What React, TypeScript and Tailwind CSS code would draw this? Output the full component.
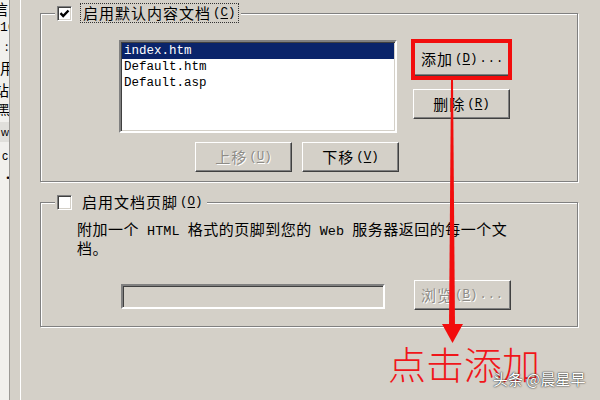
import React from 'react';

const CJK = "font-['Noto_Sans_CJK_SC','Liberation_Sans',sans-serif]";
const MONO = "font-['Liberation_Mono','Noto_Sans_CJK_SC',monospace]";

// underlined mnemonic letter, e.g. (C)
const Key = ({ k }: { k: string }) => (
  <span className={`${MONO} text-[12.5px] tracking-normal ml-[2px]`}>
    (<span className="underline underline-offset-2">{k}</span>)
  </span>
);

const CheckBox = ({ checked }: { checked?: boolean }) => (
  <div className="w-[15px] h-[15px] shrink-0 bg-white border border-t-[#808080] border-l-[#808080] border-r-white border-b-white shadow-[inset_1px_1px_0_#404040,inset_-1px_-1px_0_#d4d0c8] flex items-center justify-center">
    {checked && (
      <svg width="11" height="11" viewBox="0 0 11 11">
        <path d="M1.5 5.2 L4.2 8 L9.5 2.5" stroke="#000" strokeWidth="2.4" fill="none" />
      </svg>
    )}
  </div>
);

const Btn = ({
  children,
  disabled,
  className,
}: {
  children: React.ReactNode;
  disabled?: boolean;
  className?: string;
}) => (
  <div
    className={`flex items-center justify-center whitespace-nowrap bg-[#d4d0c8] border border-t-white border-l-white border-r-[#404040] border-b-[#404040] shadow-[inset_-1px_-1px_0_#808080] text-[15px] tracking-[1px] ${CJK} ${
      disabled ? 'text-[#8e8c87] [text-shadow:1px_1px_0_#fff]' : 'text-black'
    } ${className ?? ''}`}
  >
    {children}
  </div>
);

const FILES = ['index.htm', 'Default.htm', 'Default.asp'];

export default function App() {
  return (
    <div className="relative w-[600px] h-[400px] overflow-hidden bg-[#d4d0c8] flex text-black">
      {/* window behind, cut off at the left */}
      <div className={`w-[9px] shrink-0 bg-[#f1f0ed] overflow-hidden flex flex-col text-[15px] leading-none ${CJK}`}>
        <div className="h-[18px] -ml-[7px] pt-px whitespace-nowrap">信</div>
        <div className={`h-[20px] pt-[3px] text-[13px] whitespace-nowrap ${MONO}`}>16</div>
        <div className="h-[22px] pl-[5px] text-[12px] pt-[2px]">:</div>
        <div className="h-[22px] whitespace-nowrap">用</div>
        <div className="h-[20px] -ml-[6px] whitespace-nowrap">站</div>
        <div className="h-[20px] -ml-[3px] text-[13px] whitespace-nowrap">黑</div>
        <div className="h-[20px] bg-[#e0dfdb] text-[11px] font-['Liberation_Sans',sans-serif] pt-[5px] pl-px">w</div>
        <div className="h-[26px] text-[12px] font-['Liberation_Sans',sans-serif] pt-[8px] pl-[2px]">c</div>
        <div className="h-[22px] text-[12px] pt-[4px] pl-[2px]">·</div>
      </div>
      <div className="w-px shrink-0 bg-[#9c9a96]" />
      <div className="w-[10px] shrink-0" />
      <div className="w-px shrink-0 bg-white" />

      {/* dialog body */}
      <div className="flex-1 pl-[19px] pr-[22px] flex flex-col">
        {/* default document group */}
        <fieldset className="mt-[3px] border border-[#808080] shadow-[inset_1px_1px_0_#fff,1px_1px_0_#fff] pb-[9px]">
          <legend className="ml-[14px] px-[2px] bg-[#d4d0c8]">
            <div className="h-[20px] flex items-center">
              <CheckBox checked />
              <div className={`ml-[8px] h-[20px] px-[2px] flex items-center border border-dotted border-[#333] text-[15px] tracking-[1px] whitespace-nowrap ${CJK}`}>
                启用默认内容文档<Key k="C" />
              </div>
            </div>
          </legend>

          <div className="pl-[78px]">
            <div className="mt-[17px] flex items-start">
              <div className="w-[278px] h-[93px] bg-white border-2 border-t-[#808080] border-l-[#808080] border-r-white border-b-white shadow-[inset_1px_1px_0_#404040,inset_-1px_-1px_0_#d4d0c8] p-px">
                {FILES.map((f, i) => (
                  <div
                    key={f}
                    className={`h-[16px] pl-[2px] flex items-center text-[12.5px] ${MONO} ${
                      i === 0 ? 'bg-[#0a246a] text-white' : 'text-black'
                    }`}
                  >
                    {f}
                  </div>
                ))}
              </div>

              <div className="ml-[14px] -mt-px flex flex-col">
                <div className="relative w-[101px] h-[41px] p-[3px] pl-[2px]">
                  <Btn className="w-[97px] h-[34px] justify-start pl-[7px]">
                    添加<Key k="D" />
                    <span className={`${MONO} tracking-[1px] text-[12px] ml-[2px]`}>...</span>
                  </Btn>
                  <div className="absolute inset-0 border-4 border-[#f20d0d]" />
                </div>
                <Btn className="mt-[9px] ml-[2px] w-[97px] h-[30px]">
                  删除<Key k="R" />
                </Btn>
              </div>
            </div>

            <div className="mt-[9px] ml-[76px] flex gap-[10px]">
              <Btn disabled className="w-[97px] h-[30px]">
                上移<Key k="U" />
              </Btn>
              <Btn className="w-[97px] h-[30px]">
                下移<Key k="V" />
              </Btn>
            </div>
          </div>
        </fieldset>

        {/* footer group */}
        <fieldset className="mt-[10px] border border-[#808080] shadow-[inset_1px_1px_0_#fff,1px_1px_0_#fff] pb-[16px]">
          <legend className="ml-[14px] px-[2px] bg-[#d4d0c8]">
            <div className="h-[20px] flex items-center">
              <CheckBox />
              <div className={`ml-[8px] h-[20px] px-[2px] flex items-center text-[15px] tracking-[1px] whitespace-nowrap ${CJK}`}>
                启用文档页脚<Key k="O" />
              </div>
            </div>
          </legend>

          <div className="pl-[36px]">
            <div className={`mt-[9px] text-[15px] leading-[16px] tracking-[0.5px] whitespace-nowrap ${CJK}`}>
              附加一个<span className={`${MONO} text-[13.5px] tracking-normal`}> HTML </span>
              格式的页脚到您的<span className={`${MONO} text-[13.5px] tracking-normal`}> Web </span>
              服务器返回的每一个文
              <br />
              档。
            </div>

            <div className="mt-[24px] ml-[44px] flex items-start">
              <div className="mt-[4px] w-[264px] h-[25px] bg-[#d4d0c8] border-2 border-t-[#808080] border-l-[#808080] border-r-white border-b-white shadow-[inset_1px_1px_0_#404040,inset_-1px_-1px_0_#d4d0c8]" />
              <Btn disabled className="ml-[29px] w-[97px] h-[30px]">
                浏览<Key k="B" />
                <span className={`${MONO} tracking-[1px] text-[12px] ml-[2px]`}>...</span>
              </Btn>
            </div>
          </div>
        </fieldset>
      </div>

      {/* red annotation arrow */}
      <svg className="absolute left-0 top-0 pointer-events-none" width="600" height="400" viewBox="0 0 600 400">
        <polygon points="451,79 453,79 455,327 449,327" fill="#f20d0d" />
        <polygon points="442,324 463,324 452.5,343" fill="#f20d0d" />
      </svg>

      <div className={`absolute left-[388px] top-[344px] text-[38px] leading-none font-light text-[#f0161a] ${CJK}`}>
        点击添加
      </div>
      <div className={`absolute left-[493px] top-[371px] text-[15px] leading-none text-white [text-shadow:0_0_2px_#333,0_0_1px_#222] ${CJK}`}>
        头条 @晨星早
      </div>
    </div>
  );
}
